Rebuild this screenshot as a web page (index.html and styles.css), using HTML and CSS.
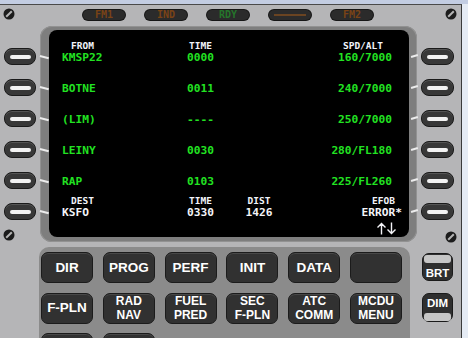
FILE: index.html
```html
<!DOCTYPE html>
<html>
<head>
<meta charset="utf-8">
<link rel="stylesheet" href="styles.css">
</head>
<body>
<div class="strip"></div>
<div class="device">
  <div class="top">
    <svg class="screw tl" viewBox="0 0 12 12"><circle cx="6" cy="6" r="5.5" fill="#1c1c1c"/><line x1="3.2" y1="8.8" x2="8.8" y2="3.2" stroke="#b4b4b4" stroke-width="2"/></svg>
    <div class="lights">
      <span class="light amber">FM1</span>
      <span class="light amber">IND</span>
      <span class="light green">RDY</span>
      <span class="light bar"><i></i></span>
      <span class="light amber">FM2</span>
    </div>
    <svg class="screw tr" viewBox="0 0 12 12"><circle cx="6" cy="6" r="5.5" fill="#1c1c1c"/><line x1="3.2" y1="8.8" x2="8.8" y2="3.2" stroke="#b4b4b4" stroke-width="2"/></svg>
  </div>

  <div class="middle">
    <div class="lsk-col left">
      <button class="lsk"><i></i></button>
      <button class="lsk"><i></i></button>
      <button class="lsk"><i></i></button>
      <button class="lsk"><i></i></button>
      <button class="lsk"><i></i></button>
      <button class="lsk"><i></i></button>
      <svg class="screw bl" viewBox="0 0 12 12"><circle cx="6" cy="6" r="5.5" fill="#1c1c1c"/><line x1="3.2" y1="8.8" x2="8.8" y2="3.2" stroke="#b4b4b4" stroke-width="2"/></svg>
    </div>

    <div class="bezel">
      <div class="screen">
        <div class="row">
          <span class="lbl c1">FROM</span>
          <span class="lbl c2">TIME</span>
          <span class="lbl c4">SPD/ALT</span>
          <span class="dat c1">KMSP22</span>
          <span class="dat c2">0000</span>
          <span class="dat c4">160/7000</span>
        </div>
        <div class="row">
          <span class="dat c1">BOTNE</span>
          <span class="dat c2">0011</span>
          <span class="dat c4">240/7000</span>
        </div>
        <div class="row">
          <span class="dat c1">(LIM)</span>
          <span class="dat c2">----</span>
          <span class="dat c4">250/7000</span>
        </div>
        <div class="row">
          <span class="dat c1">LEINY</span>
          <span class="dat c2">0030</span>
          <span class="dat c4">280/FL180</span>
        </div>
        <div class="row">
          <span class="dat c1">RAP</span>
          <span class="dat c2">0103</span>
          <span class="dat c4">225/FL260</span>
        </div>
        <div class="row last">
          <span class="lbl c1">DEST</span>
          <span class="lbl c2">TIME</span>
          <span class="lbl c3">DIST</span>
          <span class="lbl c4 efob">EFOB</span>
          <span class="dat c1 white">KSFO</span>
          <span class="dat c2 white">0330</span>
          <span class="dat c3 white">1426</span>
          <span class="dat c4 white err">ERROR*</span>
          <span class="arrows c4"><svg class="arrow-icon" viewBox="0 0 21 13" aria-label="up down"><path d="M5.5 12.5V1.5M1.5 5.5L5.5 1.5L9.5 5.5M15.5 0.5V11.5M11.5 7.5L15.5 11.5L19.5 7.5" fill="none" stroke="#f4f4f8" stroke-width="1.4"/></svg></span>
        </div>
      </div>
    </div>

    <div class="lsk-col right">
      <button class="lsk"><i></i></button>
      <button class="lsk"><i></i></button>
      <button class="lsk"><i></i></button>
      <button class="lsk"><i></i></button>
      <button class="lsk"><i></i></button>
      <button class="lsk"><i></i></button>
      <svg class="screw br" viewBox="0 0 12 12"><circle cx="6" cy="6" r="5.5" fill="#1c1c1c"/><line x1="3.2" y1="8.8" x2="8.8" y2="3.2" stroke="#b4b4b4" stroke-width="2"/></svg>
    </div>
  </div>

  <div class="bottom">
    <div class="spacer"></div>
    <div class="keypad">
      <button class="key">DIR</button>
      <button class="key">PROG</button>
      <button class="key">PERF</button>
      <button class="key">INIT</button>
      <button class="key">DATA</button>
      <button class="key"></button>
      <button class="key">F-PLN</button>
      <button class="key two">RAD<br>NAV</button>
      <button class="key two">FUEL<br>PRED</button>
      <button class="key two">SEC<br>F-PLN</button>
      <button class="key two">ATC<br>COMM</button>
      <button class="key two">MCDU<br>MENU</button>
      <button class="key"></button>
      <button class="key"></button>
    </div>
    <div class="side-keys">
      <button class="skey brt"><span class="sbar"></span><span class="stxt">BRT</span></button>
      <button class="skey dim"><span class="stxt">DIM</span><span class="sbar"></span></button>
    </div>
  </div>
</div>
</body>
</html>
```

FILE: styles.css
```css
html, body {
  margin: 0;
  padding: 0;
}
body {
  width: 468px;
  height: 338px;
  overflow: hidden;
  background: #e5ebf4;
  font-family: "Liberation Sans", Arial, sans-serif;
}
button {
  font: inherit;
  padding: 0;
  margin: 0;
}
.strip {
  height: 4px;
  background: #c3cde2;
}
.device {
  width: 461px;
  height: 333px;
  background: #b5b5b7;
  border-top: 1px solid #4a4a4a;
  border-right: 1px solid #3a3a3a;
}

/* top row */
.top {
  display: flex;
  height: 21px;
}
.screw {
  display: block;
  width: 12px;
  height: 12px;
  flex: none;
}
.screw.tl { margin: 3px 0 0 3px; }
.screw.tr { margin: 3px 4px 0 auto; }
.lights {
  display: flex;
  gap: 20px;
  margin: 5px 0 0 68px;
}
.light {
  width: 42px;
  height: 10px;
  border-radius: 5px;
  background: #2b2b2b;
  box-shadow: 0 0 0 1px #161616;
  font: bold 10px/10px "DejaVu Sans Mono", monospace;
  text-align: center;
  display: flex;
  align-items: center;
  justify-content: center;
}
.light.amber { color: #7a4316; }
.light.green { color: #25762a; }
.light.bar i {
  display: block;
  width: 32px;
  height: 2px;
  background: #6a4422;
}

/* middle */
.middle {
  display: flex;
  height: 216px;
}
.lsk-col {
  display: flex;
  flex-direction: column;
  padding-top: 22px;
}
.lsk-col.left {
  width: 32px;
  margin-left: 4px;
}
.lsk-col.right {
  width: 40px;
  margin-left: 4px;
}
.lsk {
  position: relative;
  width: 32px;
  height: 17px;
  box-sizing: border-box;
  border-radius: 8px;
  background: #383838;
  border: 1px solid #1a1a1a;
  box-shadow: inset 0 1px 0 #555;
  display: flex;
  align-items: center;
  justify-content: center;
  flex: none;
}
.right .lsk { width: 33px; }
.lsk + .lsk { margin-top: 14px; }
.lsk i {
  display: block;
  width: 21px;
  height: 4px;
  border-radius: 2px;
  background: #f3f3f3;
}
.lsk::after {
  content: "";
  position: absolute;
  left: 35px;
  top: 6px;
  width: 9px;
  height: 1.5px;
  background: #ececec;
  transform-origin: left center;
  transform: rotate(14deg);
}
.right .lsk::after {
  left: -11px;
  top: 7px;
  width: 7px;
  transform: rotate(-16deg);
}
.screw.bl { margin: 9px 0 0 -1px; }
.screw.br { margin: 11px 4px 0 auto; }

.bezel {
  margin-left: 4px;
  width: 377px;
  height: 216px;
  box-sizing: border-box;
  background: #7e7e7e;
  border-radius: 12px;
  box-shadow: inset 0 0 0 1px #929292;
  padding: 4px 8px 5px 9px;
}
.screen {
  height: 100%;
  box-sizing: border-box;
  background: #000;
  border-radius: 8px;
  padding-top: 10px;
  font-family: "DejaVu Sans Mono", monospace;
  font-weight: bold;
}
.row {
  display: grid;
  grid-template-columns: 108px 44px 90px 88px;
  grid-template-rows: 11px 14px;
  height: 31px;
  padding-left: 13px;
}
.row.last {
  grid-template-rows: 11px 14px 14px;
}
.lbl {
  grid-row: 1;
  font-size: 9.5px;
  line-height: 11px;
  color: #f2f4fa;
  white-space: nowrap;
}
.dat {
  grid-row: 2;
  font-size: 11.2px;
  line-height: 14px;
  color: #22e322;
  white-space: nowrap;
}
.dat.white { color: #f4f4f8; }
.c1 { grid-column: 1; }
.c2 { grid-column: 2; text-align: right; }
.c3 { grid-column: 3; text-align: center; }
.c4 { grid-column: 4; text-align: right; }
.lbl.c1 { padding-left: 9px; }
.lbl.c2 { padding-right: 2px; }
.lbl.c4 { padding-right: 9px; }
.lbl.efob { padding-right: 0; margin-right: -3px; }
.dat.err { margin-right: -10px; }
.arrows {
  grid-row: 3;
  margin-right: -5px;
  display: flex;
  justify-content: flex-end;
  align-items: flex-start;
  padding-top: 2px;
}
.arrow-icon {
  display: block;
  width: 21px;
  height: 13px;
}

/* bottom */
.bottom {
  display: flex;
}
.spacer {
  width: 39px;
  flex: none;
}
.keypad {
  width: 371px;
  height: 91px;
  box-sizing: border-box;
  margin-top: 5px;
  background: #8b8b8b;
  border-radius: 10px 10px 0 0;
  padding: 5px 7px 0 2px;
  display: grid;
  grid-template-columns: repeat(6, 52px);
  grid-auto-rows: 31px;
  column-gap: 9.8px;
  row-gap: 9.5px;
  align-content: start;
  overflow: hidden;
}
.key {
  box-sizing: border-box;
  border-radius: 7px;
  background: #313131;
  border: 1px solid #1b1b1b;
  box-shadow: inset 0 1px 0 #484848;
  color: #fff;
  font-weight: bold;
  font-size: 13.5px;
  line-height: 16px;
  text-align: center;
  white-space: nowrap;
}
.key.two {
  font-size: 12px;
  line-height: 14px;
}
.side-keys {
  display: flex;
  flex-direction: column;
  gap: 12px;
  margin: 11px 0 0 12px;
}
.skey {
  width: 31px;
  height: 28px;
  box-sizing: border-box;
  border-radius: 7px;
  background: #2f2f2f;
  border: 1px solid #1a1a1a;
  display: flex;
  flex-direction: column;
  align-items: center;
  color: #fff;
  font-weight: bold;
  font-size: 11.5px;
  line-height: 12px;
}
.skey.dim { height: 29px; }
.sbar {
  display: block;
  width: 27px;
  height: 8px;
  border-radius: 3px;
  background: #c6c6c6;
}
.brt { padding-top: 1px; }
.brt .stxt { margin-top: 4px; }
.dim { padding-top: 3px; }
.dim .stxt { margin-bottom: 4px; }
```
